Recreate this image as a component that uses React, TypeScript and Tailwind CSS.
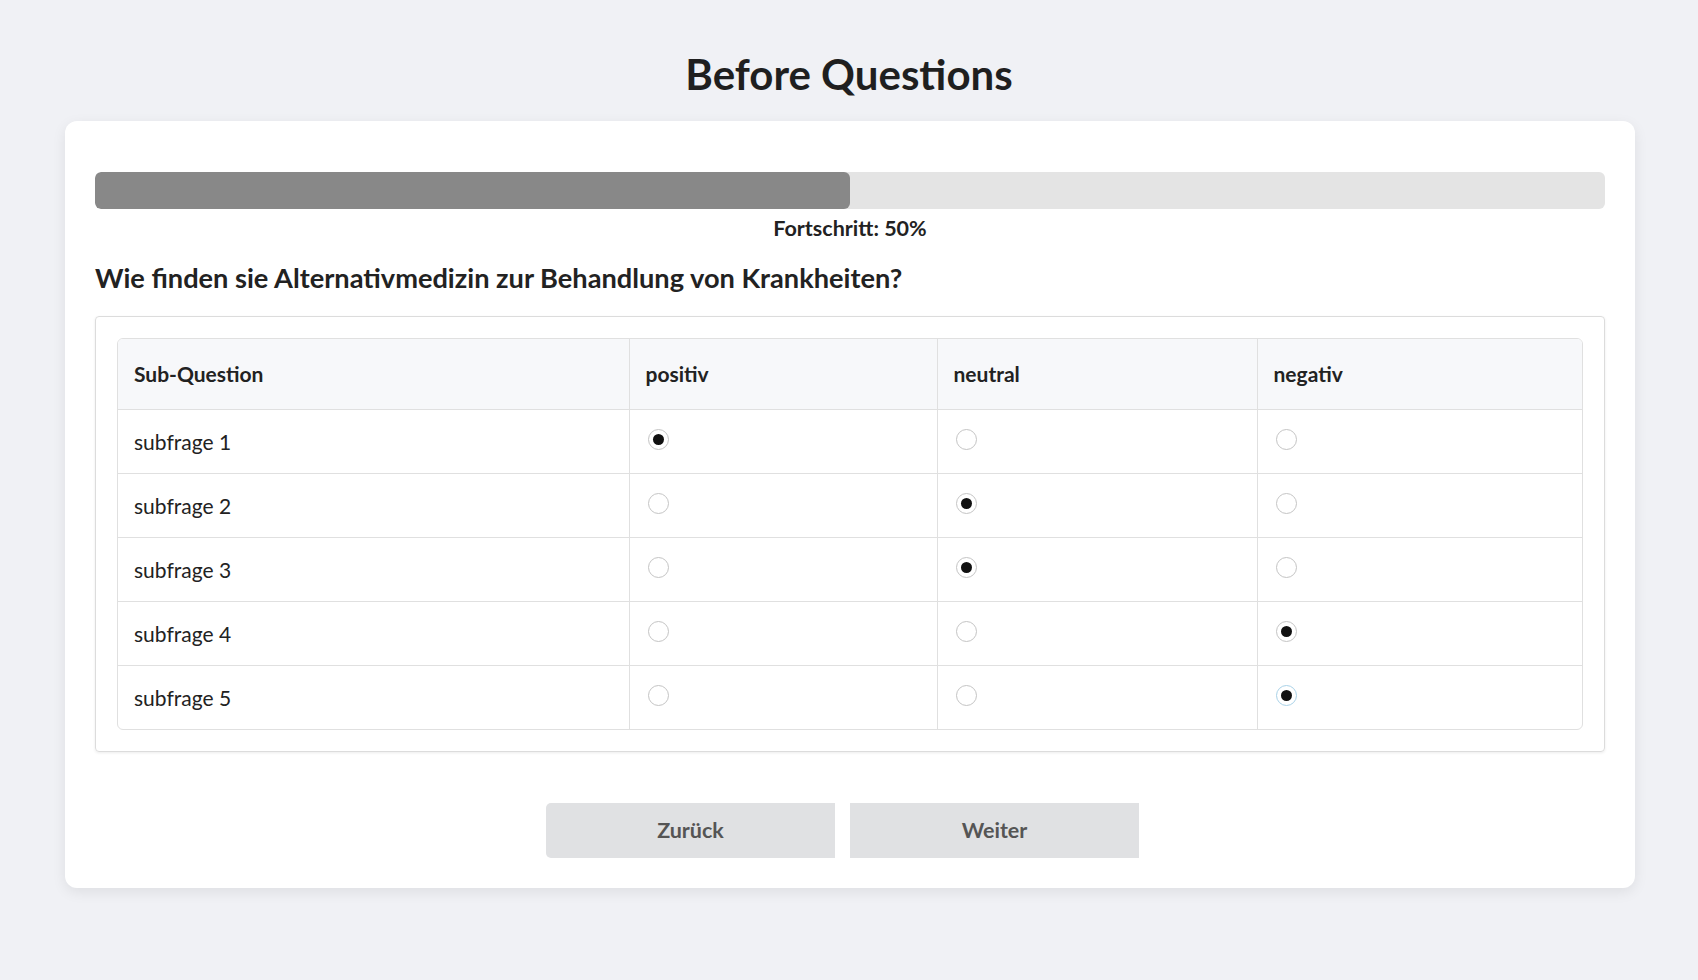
import React, { useState } from "react";

const options = ["positiv", "neutral", "negativ"];

const rows = [
  { label: "subfrage 1", value: 0 },
  { label: "subfrage 2", value: 1 },
  { label: "subfrage 3", value: 1 },
  { label: "subfrage 4", value: 2 },
  { label: "subfrage 5", value: 2 },
];

function Radio({ checked, focused }: { checked: boolean; focused?: boolean }) {
  return (
    <span
      className={
        "flex items-center justify-center w-[21px] h-[21px] rounded-full border bg-white " +
        (focused ? "border-[#a9d2e8]" : "border-[#c4c4c4]")
      }
    >
      {checked && <span className="w-[11px] h-[11px] rounded-full bg-[#111]" />}
    </span>
  );
}

export default function App() {
  const [answers] = useState(rows.map((r) => r.value));

  return (
    <main
      className="min-h-screen bg-[#f0f1f5] pt-[49px] pb-10 text-[#222]"
      style={{ fontFamily: "Lato, 'Open Sans', sans-serif" }}
    >
      <h1 className="text-center text-[42px] leading-[50px] font-bold text-[#1f1f1f] mb-[22px]">
        Before Questions
      </h1>

      {/* Main card */}
      <div className="ml-[65px] w-[1570px] bg-white rounded-xl shadow-[0_4px_14px_rgba(0,0,0,0.08)] px-[30px] pt-[51px] pb-[30px]">
        {/* Progress */}
        <div className="h-[37px] w-full bg-[#e4e4e4] rounded-md overflow-hidden">
          <div className="h-full w-1/2 bg-[#888888] rounded-md" />
        </div>
        <p className="mt-[6px] text-center text-[21.5px] leading-[27px] font-bold text-[#222]">
          Fortschritt: 50%
        </p>

        <h2 className="mt-[19px] text-[27.2px] leading-[33px] font-bold text-[#222]">
          Wie finden sie Alternativmedizin zur Behandlung von Krankheiten?
        </h2>

        {/* Matrix question */}
        <div className="mt-[22px] border border-[#dcdcdc] rounded-[4px] p-[21px] shadow-[0_1px_3px_rgba(0,0,0,0.08)]">
          <div className="border border-[#e0e0e0] rounded-md overflow-hidden">
            <table className="w-full border-collapse text-[21px]">
              <colgroup>
                <col className="w-[511px]" />
                <col className="w-[308px]" />
                <col className="w-[320px]" />
                <col />
              </colgroup>
              <thead>
                <tr className="h-[70px] bg-[#f7f8fa]">
                  <th className="text-left font-bold px-[16px]">Sub-Question</th>
                  {options.map((o) => (
                    <th key={o} className="text-left font-bold px-[16px] border-l border-[#e0e0e0]">
                      {o}
                    </th>
                  ))}
                </tr>
              </thead>
              <tbody>
                {rows.map((r, i) => (
                  <tr key={r.label} className="h-[64px] border-t border-[#e0e0e0]">
                    <td className="px-[16px] pt-[1px]">{r.label}</td>
                    {options.map((o, j) => (
                      <td key={o} className="pl-[18px] border-l border-[#e0e0e0]">
                        <span className="flex -mt-[4px]">
                          <Radio checked={answers[i] === j} focused={i === 4 && j === 2} />
                        </span>
                      </td>
                    ))}
                  </tr>
                ))}
              </tbody>
            </table>
          </div>
        </div>

        {/* Navigation */}
        <div className="mt-[51px] flex justify-center">
          <button className="w-[289px] h-[55px] mr-[15px] bg-[#e0e1e3] rounded-l-[5px] text-[21.5px] font-bold text-[#555]">
            Zurück
          </button>
          <button className="w-[289px] h-[55px] mr-[15px] bg-[#e0e1e3] text-[21.5px] font-bold text-[#555]">
            Weiter
          </button>
        </div>
      </div>
    </main>
  );
}
